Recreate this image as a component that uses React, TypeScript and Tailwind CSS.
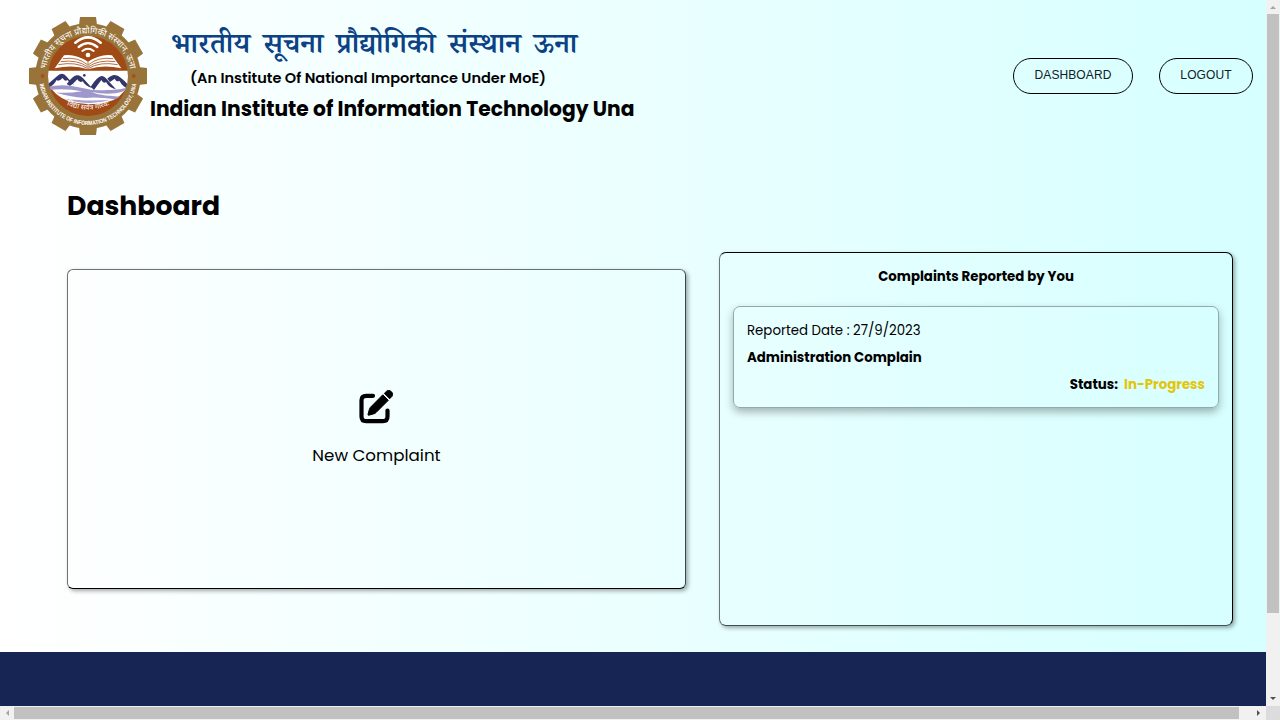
import React from "react";

const teeth = Array.from({ length: 12 }, (_, i) => i * 30);

function Emblem() {
  return (
    <svg className="h-[136px] w-[136px] shrink-0" viewBox="0 0 408 408">
      <defs>
        <path id="arcTop" d="M76 204a128 128 0 0 1 256 0" />
        <path id="arcBottom" d="M57 204a147 147 0 0 0 294 0" />
        <path id="arcMotto" d="M130 286q74 38 148 0" />
        <clipPath id="disc">
          <circle cx="204" cy="204" r="120" />
        </clipPath>
      </defs>
      <g fill="#98743b">
        <circle cx="204" cy="204" r="158" />
        {teeth.map((a) => (
          <path key={a} d="M176 60L180 27H228L232 60Z" transform={`rotate(${a} 204 204)`} />
        ))}
      </g>
      <g clipPath="url(#disc)">
        <rect x="80" y="80" width="250" height="250" fill="#a04a15" />
        <path d="M80 188H330V218Q310 270 262 282Q204 296 146 280Q98 262 80 218Z" fill="#fff" />
        <g fill="#34376b">
          <path d="M84 228L112 204Q128 190 140 206L162 230Q150 226 142 216Q134 222 128 210Q116 222 110 216Q100 234 84 240Z" />
          <path d="M140 228Q158 204 170 202Q180 200 192 214L216 240Q198 236 188 220Q178 226 172 214Q160 228 150 234Z" />
          <path d="M212 236Q232 206 244 204Q254 204 266 220L288 244Q268 240 258 222Q250 228 244 216Q232 232 222 246Z" />
          <path d="M262 212Q278 198 288 202Q300 204 324 230V242Q308 236 298 218Q290 224 284 212Q276 218 270 222Z" />
        </g>
        <path d="M84 236Q130 226 176 238T262 246Q296 248 324 238Q312 254 286 256Q250 260 216 252Q232 262 300 266L286 274Q232 266 196 270Q146 266 108 254Q150 256 186 250Q136 240 86 246Z" fill="#9e97cb" />
        <path d="M134 272Q190 280 270 276Q204 296 134 272Z" fill="#a9a2d4" />
        <circle cx="193" cy="202" r="4" fill="#34376b" />
      </g>
      <g fill="none" stroke="#fff" strokeLinecap="round">
        <path d="M166 104Q204 72 242 104" strokeWidth="8" />
        <path d="M176 117Q204 94 232 117" strokeWidth="7" />
        <path d="M187 129Q204 116 221 129" strokeWidth="6" />
      </g>
      <circle cx="204" cy="141" r="7" fill="#fff" />
      <path d="M204 161Q164 136 132 142L104 181Q160 168 204 184Q248 168 304 181L276 142Q244 136 204 161Z" fill="#fff" />
      <path d="M204 161V184M129 152Q174 146 202 170M122 161Q172 154 202 176M115 170Q168 160 202 181M279 152Q234 146 206 170M286 161Q236 154 206 176M293 170Q240 160 206 181" fill="none" stroke="#a04a15" strokeWidth="2.4" />
      <circle cx="68" cy="204" r="6" fill="#b24c1a" />
      <circle cx="341" cy="204" r="6" fill="#b24c1a" />
      <g fill="#fff" textAnchor="middle" className="font-['Noto_Sans','Noto_Sans_Devanagari',sans-serif]">
        <text fontSize="26">
          <textPath href="#arcTop" startOffset="50%">भारतीय सूचना प्रौद्योगिकी संस्थान, ऊना</textPath>
        </text>
        <text fontSize="22">
          <textPath href="#arcMotto" startOffset="50%">विद्या सर्वत्र गौरवः</textPath>
        </text>
      </g>
      <text fontSize="18" fontWeight="700" fill="#fff" className="font-['Liberation_Sans_Narrow','Liberation_Sans',sans-serif]">
        <textPath href="#arcBottom" startOffset="24" textLength="414" lengthAdjust="spacingAndGlyphs">
          INDIAN INSTITUTE OF INFORMATION TECHNOLOGY, UNA
        </textPath>
      </text>
    </svg>
  );
}

function Header() {
  return (
    <header className="flex h-[152px] items-start pt-2 pl-5">
      <Emblem />
      <div className="flex w-[500px] flex-col pt-4 whitespace-nowrap">
        <div className="flex h-[42px] gap-[13px] pt-[5px] pl-[15px] font-['Noto_Serif_Devanagari','Noto_Sans_Devanagari',serif] text-[29px] leading-[40px] font-semibold text-[#0b4285]">
          <span>भारतीय</span>
          <span>सूचना</span>
          <span>प्रौद्योगिकी</span>
          <span>संस्थान</span>
          <span>ऊना</span>
        </div>
        <div className="h-6 pl-[34px] text-[14.5px] leading-6 font-semibold">(An Institute Of National Importance Under MoE)</div>
        <div className="-ml-[7px] pl-px pt-[3px] text-[20.25px] leading-8 font-bold">Indian Institute of Information Technology Una</div>
      </div>
      <nav className="mt-[50px] mr-[13px] ml-auto flex gap-[26px] font-['Liberation_Sans',sans-serif] text-[12px] leading-[33px] tracking-[0.1px] text-[#10201f]">
        <a className="h-9 w-[120px] rounded-full border border-black text-center">DASHBOARD</a>
        <a className="h-9 w-[94px] rounded-full border border-black text-center">LOGOUT</a>
      </nav>
    </header>
  );
}

function Complaint() {
  return (
    <article className="mt-[14px] h-[102px] rounded-[7px] border border-[#91aaaa] px-[13px] pt-[10px] text-[13.33px] leading-[27px] whitespace-nowrap shadow-[0_4px_8px_rgba(0,0,0,0.3)]">
      <div>Reported Date : 27/9/2023</div>
      <div className="font-bold">Administration Complain</div>
      <div className="flex justify-end gap-[6px] font-bold">
        <span>Status:</span>
        <span className="text-[#e2c60c]">In-Progress</span>
      </div>
    </article>
  );
}

export default function App() {
  return (
    <div className="grid h-screen w-screen grid-cols-[1266px_14px] grid-rows-[706px_14px] overflow-hidden bg-[#f1f1f1] font-['Poppins','Inter',sans-serif] text-black">
      <main className="flex flex-col bg-gradient-to-r from-white to-[#d6ffff]">
        <Header />
        <h1 className="mt-[34px] h-[66px] pl-[67px] text-[26.67px] leading-[40px] font-bold">Dashboard</h1>
        <div className="flex flex-1 items-start pl-[67px]">
          <section className="mt-[17px] flex h-[320px] w-[619px] flex-col items-center rounded-[6px] border border-[#6a7474] border-r-[#3d4747] border-b-black pt-[120px] shadow-[2px_2px_4px_rgba(0,0,0,0.35)]">
            <svg className="mr-[2px] h-[34px] w-[34px]" viewBox="0 0 34 34">
              <path d="M14 5.8H7.2Q2.5 5.8 2.5 10.2V26.5Q2.5 31.2 7.2 31.2H23.8Q28.5 31.2 28.5 26.5V20.5" fill="none" stroke="black" strokeWidth="4.2" strokeLinecap="round" />
              <path d="M23.8 4.8L29.3 10.3L17 22.6Q16.2 23.4 15.2 23.7L9.8 25.2Q8.8 25.4 9 24.3L10.4 19.3Q10.7 18.2 11.5 17.2ZM25.3 3.4L27.6 1.2Q29.7-.7 31.8 1.2L32.7 2.1Q34.8 4.2 32.9 6.4L30.6 8.8Z" stroke="black" strokeWidth="1" />
            </svg>
            <span className="mt-[19px] text-[16.67px] leading-6">New Complaint</span>
          </section>
          <section className="ml-[33px] h-[374px] w-[514px] rounded-[7px] border border-black border-b-[#3d5050] border-l-[#6a7474] px-[13px] pt-[11px] shadow-[2px_2px_4px_rgba(0,0,0,0.35)]">
            <h2 className="h-7 pt-px text-center text-[13.33px] leading-6 font-bold">Complaints Reported by You</h2>
            <Complaint />
          </section>
        </div>
        <footer className="h-[54px] shrink-0 bg-[#172554]" />
      </main>
      <div className="flex flex-col items-center bg-[#f1f1f1]">
        <svg className="h-[14px] w-[14px]" viewBox="0 0 14 14"><path d="M4 9H10L7 6Z" fill="#a3a3a3" /></svg>
        <div className="h-[599px] w-3 bg-[#c1c1c1]" />
        <svg className="mt-auto h-[14px] w-[14px]" viewBox="0 0 14 14"><path d="M4 5H10L7 8Z" fill="#505050" /></svg>
      </div>
      <div className="flex items-center bg-[#f1f1f1]">
        <svg className="h-[14px] w-[14px]" viewBox="0 0 14 14"><path d="M9 4V10L6 7Z" fill="#a3a3a3" /></svg>
        <div className="h-3 w-[1225px] bg-[#c1c1c1]" />
        <svg className="ml-auto h-[14px] w-[14px]" viewBox="0 0 14 14"><path d="M5 4V10L8 7Z" fill="#505050" /></svg>
      </div>
      <div className="bg-[#dcdcdc]" />
    </div>
  );
}
